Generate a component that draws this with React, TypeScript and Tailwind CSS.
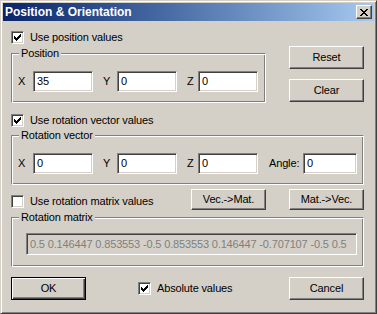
import React from "react";

const raised =
  "box-border border border-t-white border-l-white border-r-[#404040] border-b-[#404040] shadow-[inset_-1px_-1px_0_#808080] bg-[#D4D0C8]";

function Button({ label, def }: { label: string; def?: boolean }) {
  if (def) {
    return (
      <div className="box-border w-[75px] h-[23px] border border-black bg-[#D4D0C8] shadow-[inset_1px_1px_0_#fff,inset_-1px_-1px_0_#404040,inset_-2px_-2px_0_#808080] flex items-center justify-center text-black">
        {label}
      </div>
    );
  }
  return (
    <div className={`${raised} w-[75px] h-[23px] flex items-center justify-center text-black`}>{label}</div>
  );
}

function SmallButton({ label }: { label: string }) {
  return (
    <div className={`${raised} w-[75px] h-[21px] flex items-center justify-center text-black`}>{label}</div>
  );
}

function Check({ checked, label }: { checked: boolean; label: string }) {
  return (
    <div className="flex items-center h-[13px]">
      <div className="box-border w-[13px] h-[13px] border border-t-[#808080] border-l-[#808080] border-r-white border-b-white shadow-[inset_1px_1px_0_#404040,inset_-1px_-1px_0_#D4D0C8] bg-white flex items-center justify-center shrink-0">
        {checked && (
          <svg width="7" height="7" viewBox="0 0 7 7" shapeRendering="crispEdges">
            <path
              d="M0 2h1v3H0z M1 3h1v3H1z M2 4h1v3H2z M3 3h1v3H3z M4 2h1v3H4z M5 1h1v3H5z M6 0h1v3H6z"
              fill="#000"
            />
          </svg>
        )}
      </div>
      <span className="ml-[6px] whitespace-nowrap text-black">{label}</span>
    </div>
  );
}

function Edit({ value, w, h = 21, disabled }: { value: string; w: string; h?: string | number; disabled?: boolean }) {
  return (
    <div
      className={`box-border ${w} ${h === 22 ? "h-[22px]" : "h-[21px]"} border border-t-[#808080] border-l-[#808080] border-r-white border-b-white shadow-[inset_1px_1px_0_#404040,inset_-1px_-1px_0_#D4D0C8] ${
        disabled ? "bg-[#D4D0C8] text-[#808080]" : "bg-white text-black"
      } flex items-center pl-[3px] whitespace-nowrap overflow-hidden shrink-0`}
    >
      {value}
    </div>
  );
}

function Group({ title, className, children }: { title: string; className: string; children: React.ReactNode }) {
  return (
    <div
      className={`relative box-border border border-t-[#808080] border-l-[#808080] border-r-white border-b-white shadow-[inset_1px_1px_0_#fff,inset_-1px_-1px_0_#808080] ${className}`}
    >
      <span className="absolute top-[-7px] left-[7px] px-[2px] bg-[#D4D0C8] leading-[13px] whitespace-nowrap text-black">
        {title}
      </span>
      {children}
    </div>
  );
}

function XYZ() {
  return (
    <>
      <span className="w-[15px] shrink-0">X</span>
      <Edit value="0" w="w-[60px]" />
      <span className="w-[24px] pl-[10px] shrink-0">Y</span>
      <Edit value="0" w="w-[60px]" />
      <span className="w-[21px] pl-[10px] shrink-0">Z</span>
      <Edit value="0" w="w-[60px]" />
    </>
  );
}

export default function App() {
  return (
    <div className="w-[377px] h-[314px] box-border border border-t-[#D4D0C8] border-l-[#D4D0C8] border-r-[#404040] border-b-[#404040] shadow-[inset_1px_1px_0_#fff,inset_-1px_-1px_0_#808080] p-[2px] bg-[#D4D0C8] flex flex-col font-['Liberation_Sans',Arial,sans-serif] text-[11px] tracking-[-0.15px] leading-[13px] text-black">
      {/* Title bar */}
      <div className="h-[18px] shrink-0 bg-linear-to-r from-[#0A246A] to-[#A6CAF0] flex items-center justify-between pl-[2px] pr-[2px]">
        <span className="text-white font-bold text-[12px] tracking-normal">Position &amp; Orientation</span>
        <div className={`${raised} w-[16px] h-[14px] flex items-center justify-center`}>
          <svg width="8" height="7" viewBox="0 0 8 7" shapeRendering="crispEdges">
            <path
              d="M0 0h2v1H0z M6 0h2v1H6z M1 1h2v1H1z M5 1h2v1H5z M2 2h4v1H2z M3 3h2v1H3z M2 4h4v1H2z M1 5h2v1H1z M5 5h2v1H5z M0 6h2v1H0z M6 6h2v1H6z"
              fill="#000"
            />
          </svg>
        </div>
      </div>

      <div className="flex flex-col pl-[8px] pr-[10px]">
        {/* Section 1 */}
        <div className="mt-[10px] flex">
          <div className="w-[255px] flex flex-col">
            <Check checked label="Use position values" />
            <Group title="Position" className="mt-[9px] h-[50px] pt-[17px]">
              <div className="flex items-center pl-[6px]">
                <span className="w-[15px] shrink-0">X</span>
                <Edit value="35" w="w-[60px]" />
                <span className="w-[24px] pl-[10px] shrink-0">Y</span>
                <Edit value="0" w="w-[60px]" />
                <span className="w-[21px] pl-[10px] shrink-0">Z</span>
                <Edit value="0" w="w-[60px]" />
              </div>
            </Group>
          </div>
          <div className="ml-auto flex flex-col pt-[15px] gap-[10px]">
            <Button label="Reset" />
            <Button label="Clear" />
          </div>
        </div>

        {/* Section 2 */}
        <div className="mt-[11px]">
          <Check checked label="Use rotation vector values" />
        </div>
        <Group title="Rotation vector" className="mt-[8px] h-[50px] pt-[17px]">
          <div className="flex items-center pl-[6px]">
            <XYZ />
            <span className="w-[45px] pl-[11px] shrink-0">Angle:</span>
            <Edit value="0" w="w-[54px]" />
          </div>
        </Group>

        {/* Section 3 */}
        <div className="mt-[4px] h-[21px] flex items-center">
          <div className="pt-[3px]">
            <Check checked={false} label="Use rotation matrix values" />
          </div>
          <div className="ml-auto flex gap-[23px]">
            <SmallButton label="Vec.->Mat." />
            <SmallButton label="Mat.->Vec." />
          </div>
        </div>

        {/* Section 4 */}
        <Group title="Rotation matrix" className="mt-[7px] h-[50px] pt-[15px] pl-[14px]">
          <Edit
            value="0.5 0.146447 0.853553 -0.5 0.853553 0.146447 -0.707107 -0.5 0.5"
            w="w-[331px]"
            h={22}
            disabled
          />
        </Group>

        {/* Section 5 */}
        <div className="mt-[10px] h-[23px] flex items-center">
          <Button label="OK" def />
          <div className="ml-[52px]">
            <Check checked label="Absolute values" />
          </div>
          <div className="ml-auto">
            <Button label="Cancel" />
          </div>
        </div>
      </div>
    </div>
  );
}
